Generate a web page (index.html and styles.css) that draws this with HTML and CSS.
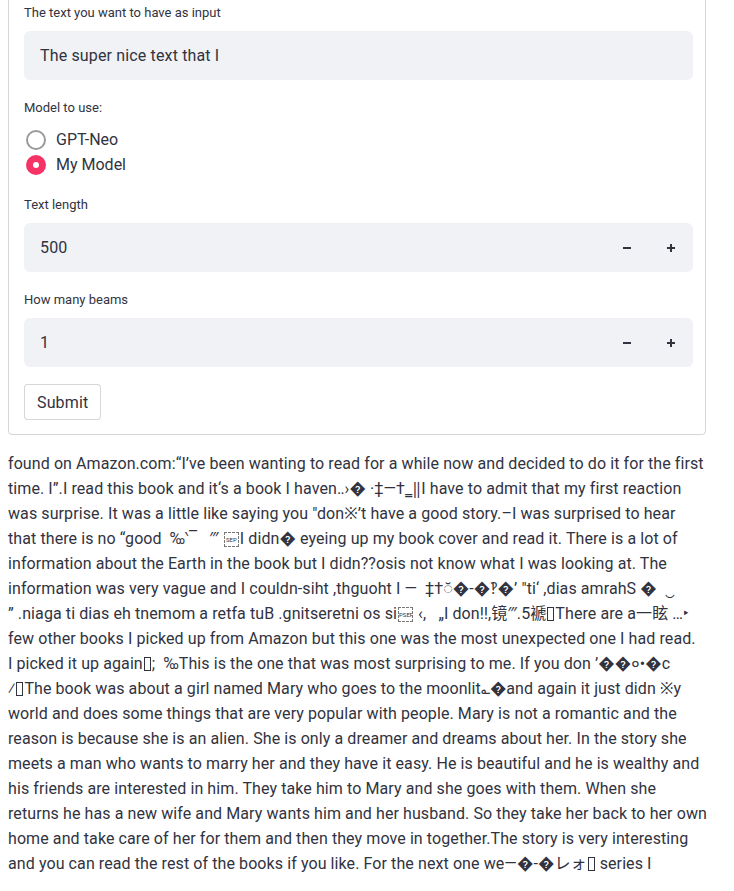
FILE: index.html
```html
<!DOCTYPE html>
<html lang="en">
<head>
<meta charset="utf-8">
<title>Text generation</title>
<link rel="stylesheet" href="styles.css">
</head>
<body>
<main class="main">
  <form class="form">
    <div class="field">
      <label class="label">The text you want to have as input</label>
      <div class="input text-input">The super nice text that I</div>
    </div>
    <div class="field field-radio">
      <label class="label">Model to use:</label>
      <div class="radios">
        <div class="radio"><span class="dot"></span><span>GPT-Neo</span></div>
        <div class="radio checked"><span class="dot"></span><span>My Model</span></div>
      </div>
    </div>
    <div class="field">
      <label class="label">Text length</label>
      <div class="input number-input">
        <span class="value">500</span>
        <span class="step"><svg width="10" height="10" viewBox="0 0 10 10"><rect x="1" y="4" width="8" height="2" fill="#31333f"/></svg></span>
        <span class="step"><svg width="10" height="10" viewBox="0 0 10 10"><rect x="1" y="4" width="8" height="2" fill="#31333f"/><rect x="4" y="1" width="2" height="8" fill="#31333f"/></svg></span>
      </div>
    </div>
    <div class="field">
      <label class="label">How many beams</label>
      <div class="input number-input">
        <span class="value">1</span>
        <span class="step"><svg width="10" height="10" viewBox="0 0 10 10"><rect x="1" y="4" width="8" height="2" fill="#31333f"/></svg></span>
        <span class="step"><svg width="10" height="10" viewBox="0 0 10 10"><rect x="1" y="4" width="8" height="2" fill="#31333f"/><rect x="4" y="1" width="2" height="8" fill="#31333f"/></svg></span>
      </div>
    </div>
    <button type="button" class="submit">Submit</button>
  </form>

  <div class="output">
    <div class="line">found on Amazon.com:“I’ve been wanting to read for a while now and decided to do it for the first</div>
    <div class="line">time. I”.I read this book and it‘s a book I haven‥›� ·‡—†‗‖I have to admit that my first reaction</div>
    <div class="line">was surprise. It was a little like saying you ″don※’t have a good story.–I was surprised to hear</div>
    <div class="line">that there is no “good&nbsp;&nbsp;‰‵‾&nbsp;&nbsp;&nbsp;‴ <span class="ctl">SEP</span>I didn� eyeing up my book cover and read it. There is a lot of</div>
    <div class="line">information about the Earth in the book but I didn??osis not know what I was looking at. The</div>
    <div class="line">information was very vague and I couldn-siht ,thguoht I — &nbsp;‡†◌̆�-�‽�’ ″ti‘ ,dias amrahS �&nbsp;&nbsp;‿</div>
    <div class="line">” .niaga ti dias eh tnemom a retfa tuB .gnitseretni os si<span class="ctl">PSEP</span> ‹,&nbsp;&nbsp;&nbsp;„I don‼,镜‴.5褫<span class="tofu"></span>There are a一眩&nbsp;…‣</div>
    <div class="line">few other books I picked up from Amazon but this one was the most unexpected one I had read.</div>
    <div class="line">I picked it up again<span class="tofu"></span>;&nbsp;&nbsp;‰This is the one that was most surprising to me. If you don ’��०•�c</div>
    <div class="line">⁄<span class="tofu"></span>The book was about a girl named Mary who goes to the moonlit؎�and again it just didn ※y</div>
    <div class="line">world and does some things that are very popular with people. Mary is not a romantic and the</div>
    <div class="line">reason is because she is an alien. She is only a dreamer and dreams about her. In the story she</div>
    <div class="line">meets a man who wants to marry her and they have it easy. He is beautiful and he is wealthy and</div>
    <div class="line">his friends are interested in him. They take him to Mary and she goes with them. When she</div>
    <div class="line">returns he has a new wife and Mary wants him and her husband. So they take her back to her own</div>
    <div class="line">home and take care of her for them and then they move in together.The story is very interesting</div>
    <div class="line">and you can read the rest of the books if you like. For the next one we—�-�レォ<span class="tofu"></span> series I</div>
  </div>
</main>
</body>
</html>
```

FILE: styles.css
```css
* { box-sizing: border-box; }

html, body {
  margin: 0;
  padding: 0;
  background: #ffffff;
}

body {
  font-family: Roboto, "Noto Sans", "Noto Sans CJK SC", sans-serif;
  color: #31333f;
  font-size: 16px;
}

.main {
  padding-left: 8px;
  width: 734px;
}

.form {
  width: 698px;
  margin-top: -14px;
  border: 1px solid rgba(49, 51, 63, 0.2);
  border-radius: 4px;
  padding: 16px 12px 14px 15px;
  display: flex;
  flex-direction: column;
}

.field {
  display: flex;
  flex-direction: column;
  gap: 8px;
  margin-bottom: 18px;
}

.field-radio {
  gap: 9px;
  margin-bottom: 18px;
}

.label {
  font-size: 13px;
  line-height: 20px;
  height: 20px;
  color: #31333f;
}

.input {
  height: 49px;
  background: #f0f2f6;
  border-radius: 6px;
  display: flex;
  align-items: center;
  font-size: 16px;
  letter-spacing: 0.15px;
  padding-left: 16px;
}

.number-input {
  padding-right: 0;
}

.number-input .value {
  flex: 1;
}

.step {
  width: 44px;
  height: 49px;
  display: flex;
  align-items: center;
  justify-content: center;
}

.radios {
  display: flex;
  flex-direction: column;
}

.radio {
  display: flex;
  align-items: center;
  height: 25px;
  gap: 10px;
  padding-left: 2px;
  font-size: 16px;
}

.dot {
  width: 20px;
  height: 20px;
  border-radius: 50%;
  border: 2px solid #9a9a9a;
  display: inline-block;
  position: relative;
  flex: none;
}

.radio.checked .dot {
  border-color: #f63366;
  background: #f63366;
}

.radio.checked .dot::after {
  content: "";
  position: absolute;
  left: 5px;
  top: 5px;
  width: 6px;
  height: 6px;
  border-radius: 50%;
  background: #ffffff;
}

.submit {
  align-self: flex-start;
  margin-top: -1px;
  height: 36px;
  padding: 0 12px;
  background: #ffffff;
  border: 1px solid rgba(49, 51, 63, 0.2);
  border-radius: 4px;
  font-family: inherit;
  font-size: 16px;
  letter-spacing: 0.15px;
  color: #31333f;
}

.output {
  margin-top: 16px;
  font-size: 16px;
  line-height: 25px;
  letter-spacing: 0.09px;
}

.line {
  white-space: nowrap;
  height: 25px;
}

.ctl {
  display: inline-block;
  overflow: hidden;
  border: 1px dashed #777;
  font-size: 6px;
  line-height: 13px;
  text-align: center;
  width: 15px;
  height: 15px;
  vertical-align: -3px;
  margin: 0 1px;
  letter-spacing: 0;
}

.tofu {
  display: inline-block;
  width: 7px;
  height: 14px;
  border: 1px solid #31333f;
  vertical-align: -2px;
  margin: 0 1px;
}
```
